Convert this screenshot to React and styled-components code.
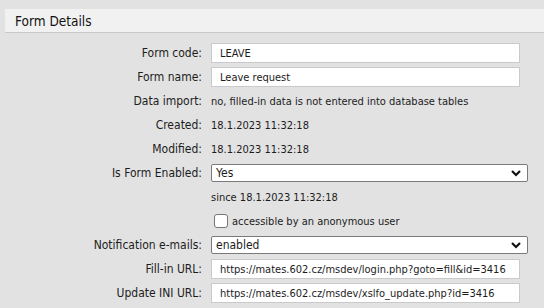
import React from "react";
import styled, { createGlobalStyle } from "styled-components";

const GlobalStyle = createGlobalStyle`
  html, body {
    margin: 0;
    padding: 0;
    background: #e2e2e2;
  }
  body {
    font-family: "DejaVu Sans Condensed", "DejaVu Sans", sans-serif;
    font-size: 12px;
    color: #1c1c1c;
  }
`;

const Page = styled.div`
  width: 544px;
  height: 308px;
  padding-top: 9px;
  box-sizing: border-box;
  overflow: hidden;
`;

const Header = styled.div`
  margin-left: 5px;
  height: 23px;
  background: #f1f1f1;
  border-bottom: 1px solid #c8c8c8;
  display: flex;
  align-items: center;
  padding-left: 10px;
  font-size: 13.5px;
  color: #111;
`;

const FormGrid = styled.div`
  display: grid;
  grid-template-columns: 202px 1fr;
  column-gap: 9px;
  grid-auto-rows: 24px;
  align-items: center;
  padding-top: 8px;
`;

const Label = styled.div`
  text-align: right;
  white-space: nowrap;
`;

const Value = styled.div`
  grid-column: ${(p) => (p.$wide ? "2" : "auto")};
  font-size: 11px;
  white-space: nowrap;
  display: flex;
  align-items: center;
`;

const TextInput = styled.div`
  width: 309px;
  height: 20px;
  box-sizing: border-box;
  background: #fff;
  border: 1px solid #cacaca;
  padding-left: 8px;
  display: flex;
  align-items: center;
  white-space: nowrap;
`;

const Select = styled.div`
  width: 317px;
  height: 18px;
  box-sizing: border-box;
  background: #fff;
  border: 1px solid #7a7a7a;
  border-radius: 2px;
  padding: 0 6px 0 4px;
  font-size: 12px;
  display: flex;
  align-items: center;
  justify-content: space-between;
`;

const Check = styled.span`
  width: 14px;
  height: 14px;
  box-sizing: border-box;
  border: 1px solid #767676;
  border-radius: 3px;
  background: #fff;
  margin: 0 4px 0 3px;
`;

const Chevron = () => (
  <svg width="10" height="8" viewBox="0 0 10 8">
    <path d="M1 2 L5 6 L9 2" fill="none" stroke="#111" strokeWidth="2.2" />
  </svg>
);

const rows = [
  { label: "Form code:", input: "LEAVE" },
  { label: "Form name:", input: "Leave request" },
  { label: "Data import:", text: "no, filled-in data is not entered into database tables" },
  { label: "Created:", text: "18.1.2023 11:32:18" },
  { label: "Modified:", text: "18.1.2023 11:32:18" },
  { label: "Is Form Enabled:", select: "Yes" },
  { text: "since 18.1.2023 11:32:18" },
  { check: "accessible by an anonymous user" },
  { label: "Notification e-mails:", select: "enabled" },
  { label: "Fill-in URL:", input: "https://mates.602.cz/msdev/login.php?goto=fill&id=3416" },
  { label: "Update INI URL:", input: "https://mates.602.cz/msdev/xslfo_update.php?id=3416" },
];

const App = () => (
  <Page>
    <GlobalStyle />
    <Header>Form Details</Header>
    <FormGrid>
      {rows.map((r, i) => (
        <React.Fragment key={i}>
          {r.label && <Label>{r.label}</Label>}
          <Value $wide={!r.label}>
            {r.input && <TextInput>{r.input}</TextInput>}
            {r.text}
            {r.select && (
              <Select>
                {r.select}
                <Chevron />
              </Select>
            )}
            {r.check && (
              <>
                <Check />
                {r.check}
              </>
            )}
          </Value>
        </React.Fragment>
      ))}
    </FormGrid>
  </Page>
);

export default App;
